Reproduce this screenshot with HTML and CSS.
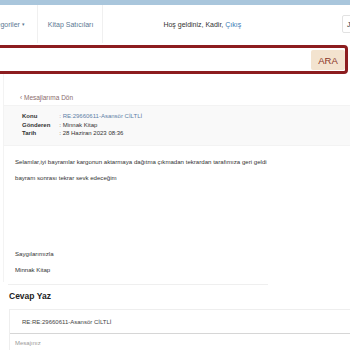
FILE: index.html
```html
<!DOCTYPE html>
<html lang="tr">
<head>
    <meta charset="UTF-8">
    <meta name="viewport" content="width=device-width, initial-scale=1.0">
    <title>Mesaj Detayı</title>
    <link rel="stylesheet" href="styles.css">
</head>
<body>
    <div class="topbar"></div>

    <nav class="navbar">
        <a class="nav-link nav-first" href="#">Kategoriler <span class="caret">▾</span></a>
        <a class="nav-link" href="#">Kitap Satıcıları</a>
        <div class="welcome">Hoş geldiniz, Kadir, <a href="#">Çıkış</a></div>
        <div class="nav-btn">J</div>
    </nav>

    <form class="search">
        <input class="search-input" type="text">
        <button class="search-btn" type="button">ARA</button>
    </form>

    <div class="message-wrap">
        <a class="back-link" href="#">‹ Mesajlarıma Dön</a>

        <div class="meta">
            <table>
                <tr><th>Konu</th><td class="subject">: RE:29660611-Asansör CİLTLİ</td></tr>
                <tr><th>Gönderen</th><td>: Minnak Kitap</td></tr>
                <tr><th>Tarih</th><td>: 28 Haziran 2023 08:36</td></tr>
            </table>
        </div>

        <div class="message-body">
            <p>Selamlar,iyi bayramlar kargonun aktarmaya dağıtma çıkmadan tekrardan tarafımıza geri geldi</p>
            <p>bayram sonrası tekrar sevk edeceğim</p>
            <p class="sign">Saygılarımızla</p>
            <p>Minnak Kitap</p>
        </div>
    </div>

    <hr class="divider">

    <div class="reply">
        <h3>Cevap Yaz</h3>
        <div class="reply-box">
            <div class="reply-subject">RE:RE:29660611-Asansör CİLTLİ</div>
            <div class="reply-text">Mesajınız</div>
        </div>
    </div>
</body>
</html>
```

FILE: styles.css
```css
body {
    margin: 0;
    font-family: 'Liberation Sans', Arial, sans-serif;
    color: #333;
    background: #fff;
    overflow: hidden;
}

a {
    text-decoration: none;
}

.topbar {
    height: 5px;
    background: #a9c6dc;
}

.navbar {
    height: 38px;
    display: flex;
    align-items: center;
    font-size: 7px;
}

.nav-link {
    color: #5a7893;
    height: 100%;
    display: flex;
    align-items: center;
    padding: 0 9px 0 10px;
    border-right: 1px solid #f0f0f0;
}

.nav-first {
    margin-left: -24px;
    padding-right: 12px;
}

.caret {
    font-size: 5px;
    margin-left: 2px;
}

.welcome {
    margin-left: 60px;
    color: #333;
}

.welcome a {
    color: #3b7ab5;
}

.nav-btn {
    margin-left: auto;
    margin-right: -14px;
    width: 16px;
    height: 16px;
    border: 1px solid #e2e2e2;
    border-radius: 2px;
    font-size: 7px;
    display: flex;
    align-items: center;
    padding-left: 4px;
}

.search {
    display: flex;
    margin: 2px 2px 0 -10px;
    height: 29px;
    box-sizing: border-box;
    border: 3px solid #8c1d1f;
    border-radius: 4px;
    padding: 2px 0 1px 2px;
}

.search-input {
    flex: 1;
    border: none;
    outline: none;
}

.search-btn {
    width: 34px;
    border: none;
    background: #f3e3cf;
    color: #8a3527;
    font-family: 'Liberation Sans', Arial, sans-serif;
    font-size: 9.5px;
    border-radius: 2px;
}

.message-wrap {
    margin-left: 3px;
    border-left: 1px solid #f3f3f3;
    padding-top: 20px;
}

.back-link {
    display: block;
    font-size: 6.5px;
    color: #8a6d6d;
    margin-left: 16px;
}

.meta {
    margin-top: 4px;
    background: #f9f9f9;
    border-top: 1px solid #f3f3f3;
    border-bottom: 1px solid #f3f3f3;
    padding: 6px 0 7px 18px;
}

.meta table {
    border-collapse: collapse;
    font-size: 6px;
}

.meta th {
    text-align: left;
    font-weight: bold;
    padding: 0 9px 0 0;
    width: 26px;
    line-height: 8.5px;
}

.meta td {
    padding: 0;
    line-height: 8.5px;
}

.meta .subject {
    color: #5d80a6;
}

.message-body {
    padding: 8px 0 4px 11px;
    font-size: 6.1px;
    color: #333;
}

.message-body p {
    margin: 0;
    line-height: 16px;
}

.message-body .sign {
    margin-top: 60px;
}

.divider {
    width: 260px;
    margin: 2px 0 0 8px;
    border: none;
    border-top: 1px solid #efefef;
}

.reply {
    padding-left: 9px;
}

.reply h3 {
    margin: 6px 0 8px;
    font-size: 8.5px;
    color: #222;
}

.reply-box {
    margin-right: -20px;
    border: 1px solid #eee;
    border-right: none;
    font-size: 6px;
}

.reply-subject {
    padding: 9px 12px 8px;
    border-bottom: 1px solid #d6d6d6;
    color: #444;
}

.reply-text {
    padding: 6px 5px 20px;
    color: #999;
}
```
